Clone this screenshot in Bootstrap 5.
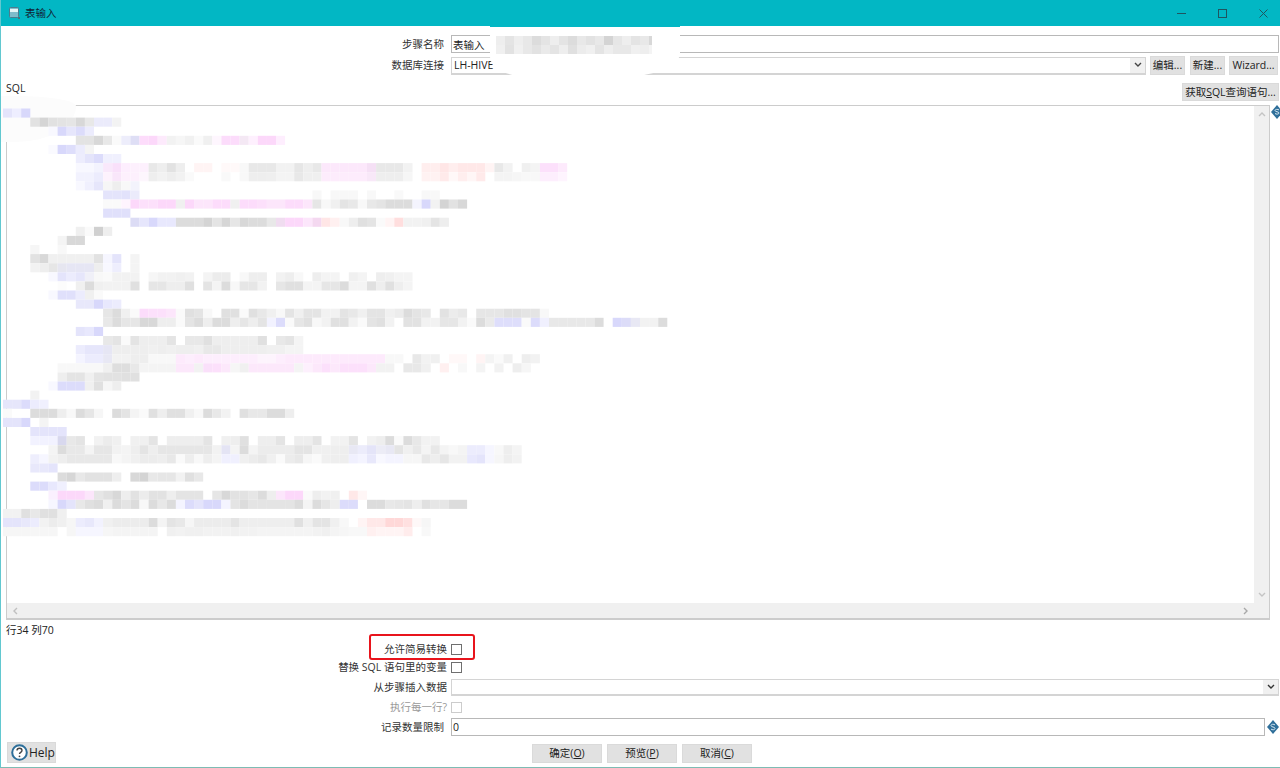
<!DOCTYPE html>
<html lang="zh-CN">
<head>
<meta charset="utf-8">
<title>表输入</title>
<link rel="stylesheet" href="https://cdn.jsdelivr.net/npm/bootstrap@5.3.0/dist/css/bootstrap.min.css">
<style>
html,body{height:100%;overflow:hidden;background:#fff}
body{font-family:"Open Sans","Noto Sans CJK SC",sans-serif;font-size:10.5px;line-height:1;color:#222}
.kwin{position:relative;height:768px;width:1280px;border-left:1px solid #62c8d0;border-bottom:1px solid #7dbcb4;overflow:hidden}
.ktitle{height:26px;background:#02b7c4;flex:none;color:#123;padding-left:8px;gap:5px;font-size:10.5px}
.kwctl{margin-right:-4px}
.wbtn{width:41px;height:26px;display:flex;align-items:center;justify-content:center}
.krow{flex:none}
.klabel{width:443px;flex:none;text-align:right;padding-right:0;white-space:nowrap;color:#333}
.klabel2{width:446px}
.kfield.form-control{height:18px;border:1px solid #b8b8b8;border-radius:0;padding:0 1px;font-size:10.5px;line-height:16px;color:#222;font-family:inherit;min-height:0;box-shadow:none}
.kcombo{height:18px;border:1px solid #d4d4d4;border-bottom-width:2px;background:#fff;padding-left:2px}
.kcombo .ktxt{flex:1;line-height:15px;color:#222}
.karrow{width:15px;background:#f0f0f0;display:flex;align-items:center;justify-content:center}
.kbtn.btn{height:19px;padding:0;border:1px solid #dadada;border-radius:0;background:#e1e1e1;color:#222;font-size:10.5px;line-height:17px;white-space:nowrap}
.kb35{width:35px}.kb49{width:49px}.kb97{width:97px}.kb70{width:70px}
.keditor{height:515px;margin:4px 10px 0 5px;border:1px solid #ccc;border-width:1px 1px 2px 1px;background:#fff}
.kview{position:relative;z-index:2;flex:1;min-width:0;min-height:0}
.kview svg{display:block;overflow:visible;width:100%;height:100%}
.kvbar{width:15px;background:#f0f0f0;flex:none;padding:8px 0}
.khbar{height:15px;background:#f0f0f0;flex:none;padding:0 20px 0 5px}
.kcheck.form-check-input{width:11px;height:11px;margin:0;border:1px solid #6f6f6f;border-radius:0;background-color:#fff;flex:none;opacity:1}
.kcheck.form-check-input:disabled{border-color:#ccc;opacity:1}
.kmuted{color:#999}
.kfooter{margin-top:6px;height:21px;padding-left:6px}
.kbtn.btn.khelp{width:49px;height:21px;gap:1px;padding-left:3px;font-size:12px;line-height:1}
.ksubmit{margin-left:476px;gap:5px}
.kred{position:absolute;left:368px;top:634px;width:106px;height:26px;border:2.5px solid #e8141c;border-radius:3px;pointer-events:none}
.kblob{position:absolute;background:#fff;pointer-events:none}
.kb1{left:489px;top:26px;width:190px;height:51px;border-top:1.5px solid #02b7c4;border-radius:0 0 60px 40px/0 0 24px 20px}
.kb2{left:-1px;top:96px;width:76px;height:46px;background:#fcfcfc;border-radius:0 60px 60px 0/0 10px 36px 0}
.kmos{position:absolute;left:495px;top:36px;width:156px;height:18px}
.kdiam{flex:none}
.kdiam1{position:absolute;left:1270px;top:105px}
</style>
</head>
<body>
<div class="kwin d-flex flex-column">
  <div class="ktitle krow d-flex align-items-center">
    <svg width="11" height="12" viewBox="0 0 11 12"><rect x=".5" y=".5" width="9" height="10" rx="1" fill="#7fbccb" stroke="#4b7c8e"/><rect x="1" y="2" width="8" height="3" fill="#e4f4f6"/><rect x="9" y="10" width="2" height="2" fill="#4f6f7a"/></svg>
    <span class="flex-grow-1">表输入</span>
    <div class="d-flex kwctl">
      <span class="wbtn"><svg width="9" height="9" viewBox="0 0 9 9"><path d="M0 4.500h9" stroke="#1f5560" fill="none"/></svg></span>
      <span class="wbtn"><svg width="9" height="9" viewBox="0 0 9 9"><rect x=".5" y=".5" width="8" height="8" stroke="#1f5560" fill="none"/></svg></span>
      <span class="wbtn"><svg width="9" height="9" viewBox="0 0 9 9"><path d="M.5.500l8 8M8.500.500l-8 8" stroke="#1f5560" fill="none"/></svg></span>
    </div>
  </div>

  <div class="krow d-flex align-items-center" style="margin-top:9px;height:18px">
    <label class="klabel">步骤名称</label>
    <input class="form-control kfield" style="margin-left:7px;width:828px" value="表输入">
  </div>
  <div class="krow d-flex align-items-center" style="margin-top:3px;height:19px">
    <label class="klabel">数据库连接</label>
    <div class="kcombo d-flex" style="margin-left:7px;width:695px"><span class="ktxt">LH-HIVE</span><span class="karrow"><svg width="8" height="6" viewBox="0 0 8 6"><path d="M1 1l3 3 3-3" stroke="#444" stroke-width="1.4" fill="none"/></svg></span></div>
    <button class="btn kbtn kb35" style="margin-left:4px" type="button">编辑...</button>
    <button class="btn kbtn kb35" style="margin-left:5px" type="button">新建...</button>
    <button class="btn kbtn kb49" style="margin-left:4px" type="button">Wizard...</button>
  </div>
  <div class="krow d-flex align-items-center justify-content-between" style="margin-top:8px;height:18px;padding:0 1px 0 5px">
    <span style="margin-top:-8px">SQL</span>
    <button class="btn kbtn kb97" type="button" style="height:18px">获取<u>S</u>QL查询语句...</button>
  </div>

  <div class="keditor krow d-flex flex-column">
    <div class="d-flex flex-grow-1" style="min-height:0">
      <div class="kview"><svg id="mosaic" aria-hidden="true"></svg></div>
      <div class="kvbar d-flex flex-column justify-content-between align-items-center">
        <svg width="8" height="6" viewBox="0 0 8 6" style="margin-top:-3px"><path d="M1 5l3-3 3 3" stroke="#c4c4c4" stroke-width="1.4" fill="none"/></svg>
        <svg width="8" height="6" viewBox="0 0 8 6" style="margin-bottom:-3px"><path d="M1 1l3 3 3-3" stroke="#c4c4c4" stroke-width="1.4" fill="none"/></svg>
      </div>
    </div>
    <div class="khbar d-flex justify-content-between align-items-center">
      <svg width="6" height="8" viewBox="0 0 6 8"><path d="M5 1L2 4l3 3" stroke="#c0c0c0" stroke-width="1.4" fill="none"/></svg>
      <svg width="6" height="8" viewBox="0 0 6 8"><path d="M1 1l3 3-3 3" stroke="#a8a8a8" stroke-width="1.4" fill="none"/></svg>
    </div>
  </div>

  <div class="krow" style="height:20px;padding:5px 0 0 5px">行34 列70</div>

  <div class="krow d-flex align-items-center" style="height:18px">
    <label class="klabel klabel2" for="c1">允许简易转换</label>
    <input class="form-check-input kcheck" style="margin-left:4px" type="checkbox" id="c1">
  </div>
  <div class="krow d-flex align-items-center" style="height:18px">
    <label class="klabel klabel2" for="c2">替换 SQL 语句里的变量</label>
    <input class="form-check-input kcheck" style="margin-left:4px" type="checkbox" id="c2">
  </div>
  <div class="krow d-flex align-items-center" style="margin-top:3px;height:17px">
    <label class="klabel klabel2">从步骤插入数据</label>
    <div class="kcombo d-flex" style="margin-left:4px;width:828px;height:17px"><span class="ktxt"></span><span class="karrow"><svg width="8" height="6" viewBox="0 0 8 6"><path d="M1 1l3 3 3-3" stroke="#333" stroke-width="1.4" fill="none"/></svg></span></div>
  </div>
  <div class="krow d-flex align-items-center" style="margin-top:2px;height:18px">
    <label class="klabel klabel2 kmuted" for="c3">执行每一行?</label>
    <input class="form-check-input kcheck" style="margin-left:4px" type="checkbox" id="c3" disabled>
  </div>
  <div class="krow d-flex align-items-center" style="margin-top:2px;height:18px">
    <label class="klabel">记录数量限制</label>
    <input class="form-control kfield" style="margin-left:7px;width:815px" value="0">
    <svg class="kdiam" style="margin-left:1px" width="14" height="16" viewBox="0 0 14 16"><path d="M7 1l6 7-6 7-6-7z" fill="#2f6f9a"/><path d="M9 6c-1-1.200-4-1-4 .6 0 1.800 4 1 4 2.800 0 1.600-3 1.800-4 .6" fill="none" stroke="#d8e8f2" stroke-width="1"/></svg>
  </div>

  <div class="kfooter krow d-flex align-items-end">
    <button class="btn kbtn khelp d-flex align-items-center" type="button">
      <svg width="17" height="17" viewBox="0 0 17 17"><circle cx="8.500" cy="8.500" r="7.300" fill="#fff" stroke="#2d6f9a" stroke-width="2"/><path d="M6 6.500c0-3 5-3 5 0 0 1.800-2.500 1.800-2.500 3.500" fill="none" stroke="#444" stroke-width="1.400"/><circle cx="8.500" cy="12.300" r=".9" fill="#444"/></svg>
      <span>Help</span>
    </button>
    <div class="ksubmit d-flex">
      <button class="btn kbtn kb70" type="button">确定(<u>O</u>)</button>
      <button class="btn kbtn kb70" type="button">预览(<u>P</u>)</button>
      <button class="btn kbtn kb70" type="button">取消(<u>C</u>)</button>
    </div>
  </div>

  <div class="kblob kb1"></div>
  <div class="kblob kb2"></div>
  <svg class="kmos" id="mos2" viewBox="0 0 156 18" aria-hidden="true"></svg>
  <svg class="kdiam1" width="12" height="14" viewBox="0 0 12 14"><path d="M6 0l6 7-6 7-6-7z" fill="#2f6f9a"/><path d="M8 5c-1-1-4-.8-4 .5 0 1.600 4 .9 4 2.500 0 1.300-3 1.500-4 .5" fill="none" stroke="#d8e8f2"/></svg>
  <div class="kred"></div>
</div>

<script>
var D=[
[0,0,"e4e4fb eeeeff d8d8fb"],
[1,3,"e2 d5 e1 e3 e5 d8 e8 ebebfb ebebfb f3"],
[2,5,"f8f8ff d8d8fb e6e6fc dcdcfb ececfd"],
[3,8,"e3 e3 d8 e8 fa ededfb dedef5 fddcfb fcd8fa fdeafc f2 f6 f1 fa f0 fef6fe fcdcfb fcdcfb f4e8f4 fef0fe fcd8fa fcd8fa feeefe"],
[4,5,"fafaff d8d8fb dedefb ececfd f4"],
[5,8,"ededfd e4e4fb dcdcfb f0f0fe f0f0fe"],
[6,8,"f8f8ff f8f8ff f3f3fe f9e8fb f9e0fa fdeefe fdf0fd fdf0fd e8 ee e2 ee . fff4f4 fff4f4 . fff9f9 fff9f9 f8 e8 e8 e8 f2 f2 e6 ee e8 fce8fb fce8fb fce8fb fce8fb fce8fb f5e0f5 e8 e8 e8 f2 . ffeeee ffeeee ffe6e6 ffeeee ffe8e8 ffe8e8 ffe8e8 fff4f4 e8 f2 . f0 f4 fce0fb fce0fb fdeafc"],
[7,8,"f2f2fe f2f2fe ececfd fdf2fd f9e6fa fdf0fd fdf0fd fdf6fd ee f2 ee f2 fa . . . f9 . f8 ee ee ef f4 f4 e8 ef ef fdecfc fdecfc fdecfc fdecfc fdecfc f8e8f8 ee ee ee f6 . fff2f2 fff2f2 ffeaea fff8f8 ffeeee fff6f6 ffeaea . f4 f4 f6 f8 f8 fdeefd fdeefd fef4fe"],
[8,8,"f8f8ff f0f0fe e6e6fb f6 ee f8 f3f3fc"],
[9,11,"e4e4fb e4e4fb e2e2fb ebebfb"],
[9,34,"f8 . f8 f8 f8 . f8 . . f9 . . f8 f8"],
[10,11,"fa fa fef4fe fcd8fa fce0fb fce0fb fcd8fa fcd8fa f0 fcd8fa fce6fb fce6fb fcdcfb fcdcfb f0 fcdcfb fcdcfb fce0fb fce6fb fce6fb fcdcfb fcdcfb fce6fb e6 f8 f0 e4 e8 f8 e8 e4 dc dc dc f4f4fe d8d8fb f2 d4 e2 d8"],
[11,11,"e0e0fb e0e0fb e0e0fb"],
[12,14,"dcdcf5 e6e6fc d8d8fb e8e8fd e8e8fd dc dc dc d4 e4 d6 e6 d8 dc dc e8 f0dcf0 fcd8fa fcd8fa fce6fb f4d8f0 ffe6e6 fff0f0 f8 ee e0 e4 fa fff4f4 ffdede f2 f2 f0 e4 ee"],
[13,8,"f0 fa d0 ee"],
[14,6,"f4 d8 d8"],
[15,3,"f6 . . f8"],
[16,3,"e2 d8 f0 f0 f0 f0 f0 e2 f6f6ff e4e4fb . f4"],
[17,3,"f2 ee e6 e6e6f0 e6e6f4 e6e6f4 e6e6f4 ee f8f8ff eeeefd . f4"],
[18,5,"f8f8ff e4e4fb ececfd e6e6fb f0f0f8 f8 fa f2 f2 f2 . f6 f2 f2 f0 f2 . f4 ec ec . f8 ee ee . f2 ee f8 . ee f4 f4 . f0 f4 . ee f0 f4 f4"],
[19,6,"fc . f0 dc f0 f2 f2 f2 e0 . e6 e6 ee ee e0 . e4 f4 dc f8 e6 e6 f2 . e6 e0 e0 f4 f4 e6 e6 dc f4 f4 e0 ee e0 ee f4"],
[20,5,"f8f8ff e0e0fb e0e0fb ececfd f0 fa"],
[21,8,"e8e8fb e8e8fb d8d8fb e8e8fd ececfd"],
[22,11,"e6 dc f0 fa fcdcfb fce0fb fce0fb fce6fb fa e0 e4 f8 . e0 e0 fa e0 e8 f0 f8 e4 f0 e4 e4 f2 f2 e4 e8 f0 e4 e4 f0 ec dc e4 e8 . e2 ec e8 . e6 e6 e6 e0 e0 e4 e4 f8"],
[23,11,"e8 dc e6 e6 d8 d8 ee ee fa e4 dc ee dc dc ee e6 ee e4 f2f2ff dcdcfb fa e6 e0 f8 f2 e0 e0 f2 fa e4 e0 f2 . e2 e2 f2 f2 e6 e6 f2 fa dc ea dedefb dedefb dedefb fa dcdcfb f0f0fe e8 e8 e8 e8 e8 dc . d8d8fb dcdcf8 e8e8f4 f2 f2 dc"],
[24,8,"e4e4fb e8e8fd d8d8fb"],
[25,11,"e8 e4 fa e4 ee ee ee e4 . e8 e8 e0 ee ee ee ee ee e0 . e8 e4 f4"],
[26,8,"ececfd e6e6fb e6e6fb e6e6f4 ee ee ee ee f0 ee f0 ee ee f0 e8 e8 ee ee ee ee ee f0 f0 f4 f4"],
[27,8,"f4f4ff ececfd ececfd e8e8f4 f2 f2 ee ee f8 f8 f8 fdeafc fdeefd fdeafc fdeefd fdeefd fdeefd fdeefd fdeefd fdeefd fdf4fd fdf4fd fdeefd fdeafc fdeafc fdeafc fdeafc fdeafc fdeafc fdeafc fdeafc fdeafc fdeafc fdeafc f8 f8 . e8 f2 f0 . fff8f8 fff8f8 . fff4f4 f4 fa f0 . ee f2"],
[28,6,"f8 f8 f8 f8 f8 f0 de de e8 f4 f4 f4 f4 fce8fb fce8fb f2 fae0fa fce0fb fce8fb f6 f0 fce8fb fce8fb fce8fb fce8fb fce8fb f4 fdf0fd fce8fb fce0fb fce8fb fce0fb fce0fb fce0fb fce8fb f2 f2 . e8 e8 f0 . fff0f0 . f8 . f4 . f2 . ee f6"],
[29,6,"ee e4 e4 f0 e4 e2 e2 e0 e0"],
[30,5,"f8f8ff dcdcfb dcdcfb dcdcfb f0 e0 f6 ee"],
[31,3,"f2"],
[32,0,"e6e6fb e6e6fb dcdcfb ececfd f0f0fe"],
[33,0,"fa . . dc dc dc ee f8 dc e6 f6 . dc e4 f4 fa e0 ee e0 e0 f0 f8 dc e8 f2 . e0 e8 e8 dc dc ee"],
[34,0,"e4e4fb e4e4fb d8d8fb . f4"],
[35,3,"e4e4fb e4e4fb e4e4fb e4e4fb"],
[36,3,"f2f2ff f2f2ff f2f2ff d8d8ee e8 e4 . f2 ec f0 . f0 f0 e4 . ee ee ee ee e4 . f0 ee e0 . ee ee e4 . ee ee e4 . f2 f2 e4 . f2 ee dc fa dc e8 f2 f2"],
[37,5,"f4 dc e8 e8 f4 e6 e6 f2 f4 ee e4 ee e6 e6 e6 e6 e6 e6 f2 e4e4f4 f4 dc f4 ec ec ec ec e4 e4 f0 f0 ee ee e8e8f4 ececfb e4e4f8 ececf6 e8e8f4 e4 f0 e8 f4 e8 f4 f8 f4 ececfd ececfd f6f6ff f8 ee f4"],
[38,3,"eeeefd f6f6ff f2 ee e8 e8 e8 e8 e8 f8 f4 f0 ec ec ee e8 fa ee f8 ee f4 f0f0fe f0f0fe f0 ec e8 f0 fa ec e8 f6 fa f0 ee ee f0f0fe f4f4ff e8e8fb f8f8ff f4f4ff f4f4ff f6 f6 e8 ee e6 f2 f2 e8e8fd e4e4fb f6f6ff f6 ee f2"],
[39,3,"e8e8fb e8e8fb e4e4fb"],
[40,6,"dc d6 e8 e2 e2 e2 ee . d8 d4 e8 e6 e6 f2 e0 e8"],
[41,3,"dcdcfb dcdcfb e8e8fd f0f0fe"],
[42,5,"faf0fe fcd8fa fcd8fa fcd8fa fce6fb e6 e0 d8 ee e2 ec e2 e2 ee e4 e4 e4 . e6 d8 e2 e2 e6 dc ee fce6fb fcd8fa fcd8fa fa ee f2 f0 . ffe8e8 fff6f6"],
[43,5,"f6f6ff d8d8fb e4e4fb e8 e0 dc f0 dc e4 dc f8 dc e8 dc f4f4ff dcdcfb e4e4fb d8d8fb d8d8fb f4f4ff e4 dc e4 e4 e4 e4 e4 dc f4 dc e6 ee dcdcfb dcdcfb . dc dc e8 e6 e4 ee e0 e6 e6 dc dc"],
[44,0,"f2 f2 e0 e8 e0 e0 f0"],
[45,0,"e4e4fb e4e4fb e8e8fb ececfd f2 ec f0 f6 ececfd e8e8fb f2f2fe f0 ec ec ec ec dc f4 e4 e8 f6 ec ec ec ec e4 ee ee ee ee ee ee e0 f0 e4 e4 f0 f8 . fff4f4 ffe8e8 ffe8e8 ffd8d8 ffd8d8 ffe0e0 fef8f8 f6"],
[46,0,"f6 f6 f6 f6 f6 f6 . f6 f6f6ff f6f6ff f6f6ff f6 f4 f4 f4 f4 f4 . f0 f2 f0 f0 f2 f2 f2 f0 f2 f2 f4 f4 f4 f4 f4 f4 f2 f0 f4 f6 f8 f8 fff0f0 fff4f4 fff4f4 fff4f4 ffecec . f8"]
];
function hex(t){return "#"+(t.length==2?t+t+t:t);}
var s="";
D.forEach(function(d){
  d[2].split(" ").forEach(function(t,i){
    if(t==".")return;
    var x=3+9.1*(d[1]+i)-7, y=108.5+9.1*d[0]-106;
    s+='<rect x="'+x.toFixed(1)+'" y="'+y.toFixed(1)+'" width="9.100" height="9.100" fill="'+hex(t)+'"/>';
  });
});
document.getElementById("mosaic").innerHTML=s;
var M=["ee e4 ee e8 dc e4 ee e4 dc e8 e2 e8 d4 e6 ee e4 e8 d8","f0 e2 f0 e8 e2 ea e4 ee e0 ec f0 e4 ee e8 e8 f0 ee f4"];
var m="";
M.forEach(function(r,j){r.split(" ").forEach(function(t,i){m+='<rect x="'+(i*9)+'" y="'+(j*9)+'" width="9" height="9" fill="'+hex(t)+'"/>';});});
document.getElementById("mos2").innerHTML=m;
</script>
<script src="https://cdn.jsdelivr.net/npm/bootstrap@5.3.0/dist/js/bootstrap.bundle.min.js"></script>
</body>
</html>
